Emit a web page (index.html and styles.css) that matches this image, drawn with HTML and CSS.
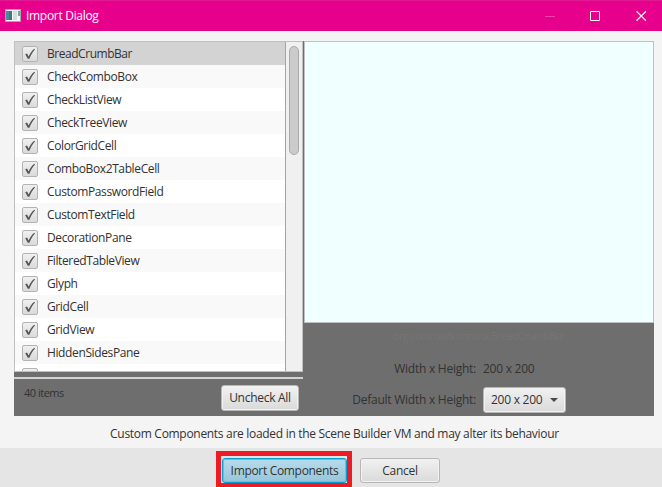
FILE: index.html
```html
<!DOCTYPE html>
<html lang="en">
<head>
<meta charset="utf-8">
<title>Import Dialog</title>
<link rel="stylesheet" href="styles.css">
</head>
<body>
<svg class="defs" width="0" height="0"><defs><symbol id="check" viewBox="0 0 16 16"><path d="M3.2 8.2 5 7.4 6.7 10.4C8 7.5 9.7 4.8 12.4 2.8L13 3.4C10.6 6 8.8 9 7.4 12.8H5.8Z" fill="#555"/></symbol></defs></svg>
<div class="window">
  <header class="titlebar">
    <svg class="app-icon" width="16" height="13" viewBox="0 0 16 13"><path d="M0 0h16v13H0z" fill="#a4a9ac"/><path d="M1 1h14v11H1z" fill="#f5f8f8"/><path d="M1 2h6v9H1z" fill="#397d77"/><path d="M1 2h3v9H1z" fill="#4a8ca0"/><path d="M8 2h4v9H8z" fill="#d3dde5"/><path d="M13 2h2v5h-2z" fill="#77a68c"/></svg>
    <h1><span>Import Dialog</span></h1>
    <svg class="controls" width="102" height="10" viewBox="0 0 102 10" fill="none"><path d="M0 5.5h10" stroke="#f042ae"/><path d="M45.5.5h9v9h-9z" stroke="#fff"/><path d="m91.5.3 9.4 9.4m0-9.4-9.4 9.4" stroke="#fff" stroke-width="1.2"/></svg>
  </header>
  <main class="content">
    <section class="left">
      <div class="list">
        <ul>
          <li class="selected"><i><svg><use href="#check"/></svg></i><span>BreadCrumbBar</span></li>
          <li><i><svg><use href="#check"/></svg></i><span>CheckComboBox</span></li>
          <li><i><svg><use href="#check"/></svg></i><span>CheckListView</span></li>
          <li><i><svg><use href="#check"/></svg></i><span>CheckTreeView</span></li>
          <li><i><svg><use href="#check"/></svg></i><span>ColorGridCell</span></li>
          <li><i><svg><use href="#check"/></svg></i><span>ComboBox2TableCell</span></li>
          <li><i><svg><use href="#check"/></svg></i><span>CustomPasswordField</span></li>
          <li><i><svg><use href="#check"/></svg></i><span>CustomTextField</span></li>
          <li><i><svg><use href="#check"/></svg></i><span>DecorationPane</span></li>
          <li><i><svg><use href="#check"/></svg></i><span>FilteredTableView</span></li>
          <li><i><svg><use href="#check"/></svg></i><span>Glyph</span></li>
          <li><i><svg><use href="#check"/></svg></i><span>GridCell</span></li>
          <li><i><svg><use href="#check"/></svg></i><span>GridView</span></li>
          <li><i><svg><use href="#check"/></svg></i><span>HiddenSidesPane</span></li>
          <li><i></i></li>
        </ul>
        <div class="scrollbar"><div class="thumb"></div></div>
      </div>
      <div class="list-footer">
        <span class="count">40 items</span>
        <button class="uncheck"><span>Uncheck All</span></button>
      </div>
    </section>
    <section class="right">
      <div class="preview"></div>
      <p class="class-name"><span>org.controlsfx.control.BreadCrumbBar</span></p>
      <div class="sizes">
        <span class="label">Width x Height:</span><span class="value">200 x 200</span>
        <span class="label wide">Default Width x Height:</span><button class="combo"><span>200 x 200</span><svg width="8" height="4" viewBox="0 0 8 4"><path d="M0 0h8L4 4z" fill="#494949"/></svg></button>
      </div>
    </section>
  </main>
  <p class="note"><span>Custom Components are loaded in the Scene Builder VM and may alter its behaviour</span></p>
  <footer class="actions">
    <div class="highlight"><button class="primary"><span>Import Components</span></button></div>
    <button class="cancel"><span>Cancel</span></button>
  </footer>
</div>
</body>
</html>
```
FILE: styles.css
```css
* { box-sizing: border-box; }
body { margin: 0; overflow: hidden; font: 12px/16px "Open Sans", "Noto Sans", sans-serif; color: #323232; white-space: nowrap; }
h1, p, ul { margin: 0; padding: 0; font: inherit; }
.defs { display: block; }
.window { width: 662px; height: 487px; background: #f4f4f4; display: flex; flex-direction: column; }
.titlebar { height: 31px; background: #e6008c; border-top: 1px solid #e01a92; display: flex; align-items: center; padding: 0 15px 1px 5px; color: #fff; flex: none; }
.titlebar h1 { margin-left: 5px; flex: 1; padding-top: 1px; letter-spacing: -.3px; }
.content { margin: 10px 8px 0 14px; height: 375px; background: #6e6e6e; display: flex; gap: 1px; flex: none; }
.left { width: 289px; }
.list { height: 331px; border: 1px solid #c0c0c0; display: flex; background: #fff; overflow: hidden; }
.list ul { flex: 1; list-style: none; }
.list li { height: 23px; padding-left: 7px; display: flex; align-items: center; gap: 9px; letter-spacing: -.38px; }
.list li:nth-child(even) { background: #f9f9f9; }
.list li.selected { background: #d3d3d3; }
.list li i { width: 16px; height: 16px; margin-top: 1px; border: 1px solid #b3b3b3; border-radius: 2px; background: linear-gradient(#f0f0f0, #dadada); display: block; }
.list li i svg { display: block; width: 16px; height: 16px; margin: -1px; }
.list li span { padding-top: 1px; }
.list li.selected span { letter-spacing: -.46px; }
.scrollbar { width: 17px; background: #f0f0f0; border-left: 1px solid #a4a4a4; padding: 4px 3px; }
.thumb { width: 10px; height: 109px; border: 1px solid #a9a9a9; border-radius: 5px; background: #cbcbcb; }
.list-footer { margin-top: 5px; border-top: 2px solid #d3d3d3; display: flex; justify-content: space-between; padding: 6px 4px 0 10px; }
.count { font-size: 11px; letter-spacing: -.5px; }
button { font: inherit; color: #323232; height: 26px; padding: 0; border: 1px solid #b7b7b7; border-radius: 3px; background: linear-gradient(#f1f1f1, #dadada); box-shadow: inset 0 0 0 1px #f2f2f2; display: flex; align-items: center; justify-content: center; }
.uncheck { width: 78px; letter-spacing: -.28px; }
.right { width: 350px; }
.preview { height: 282px; background: #f0ffff; border: 1px solid #c0c0c0; }
.class-name { padding-top: 5px; text-align: center; font-size: 10.5px; letter-spacing: -.44px; color: #757575; }
.sizes { margin-top: 13px; display: grid; grid-template-columns: 172px 1fr; column-gap: 7px; grid-template-rows: 24px 26px; row-gap: 6px; align-items: center; letter-spacing: -.25px; }
.sizes .label { text-align: right; }
.combo { width: 83px; justify-content: flex-start; padding-left: 7px; gap: 8px; letter-spacing: -.25px; }
.note { height: 32px; line-height: 35px; text-align: center; padding-left: 7px; flex: none; letter-spacing: -.3px; }
.actions { flex: 1; background: #e5e5e5; padding: 3px 0 0 216px; display: flex; gap: 8px; }
.highlight { width: 136px; height: 37px; border: 5px solid #ed1c24; padding: 2px 0 0 1px; flex: none; }
.primary { width: 125px; height: 25px; border: 1px solid #039ed3; background: linear-gradient(#b7dcec, #98c5da); box-shadow: inset 0 0 0 1px #71bddb; letter-spacing: -.32px; }
.cancel { width: 80px; height: 25px; margin-top: 7px; letter-spacing: -.3px; }
```
